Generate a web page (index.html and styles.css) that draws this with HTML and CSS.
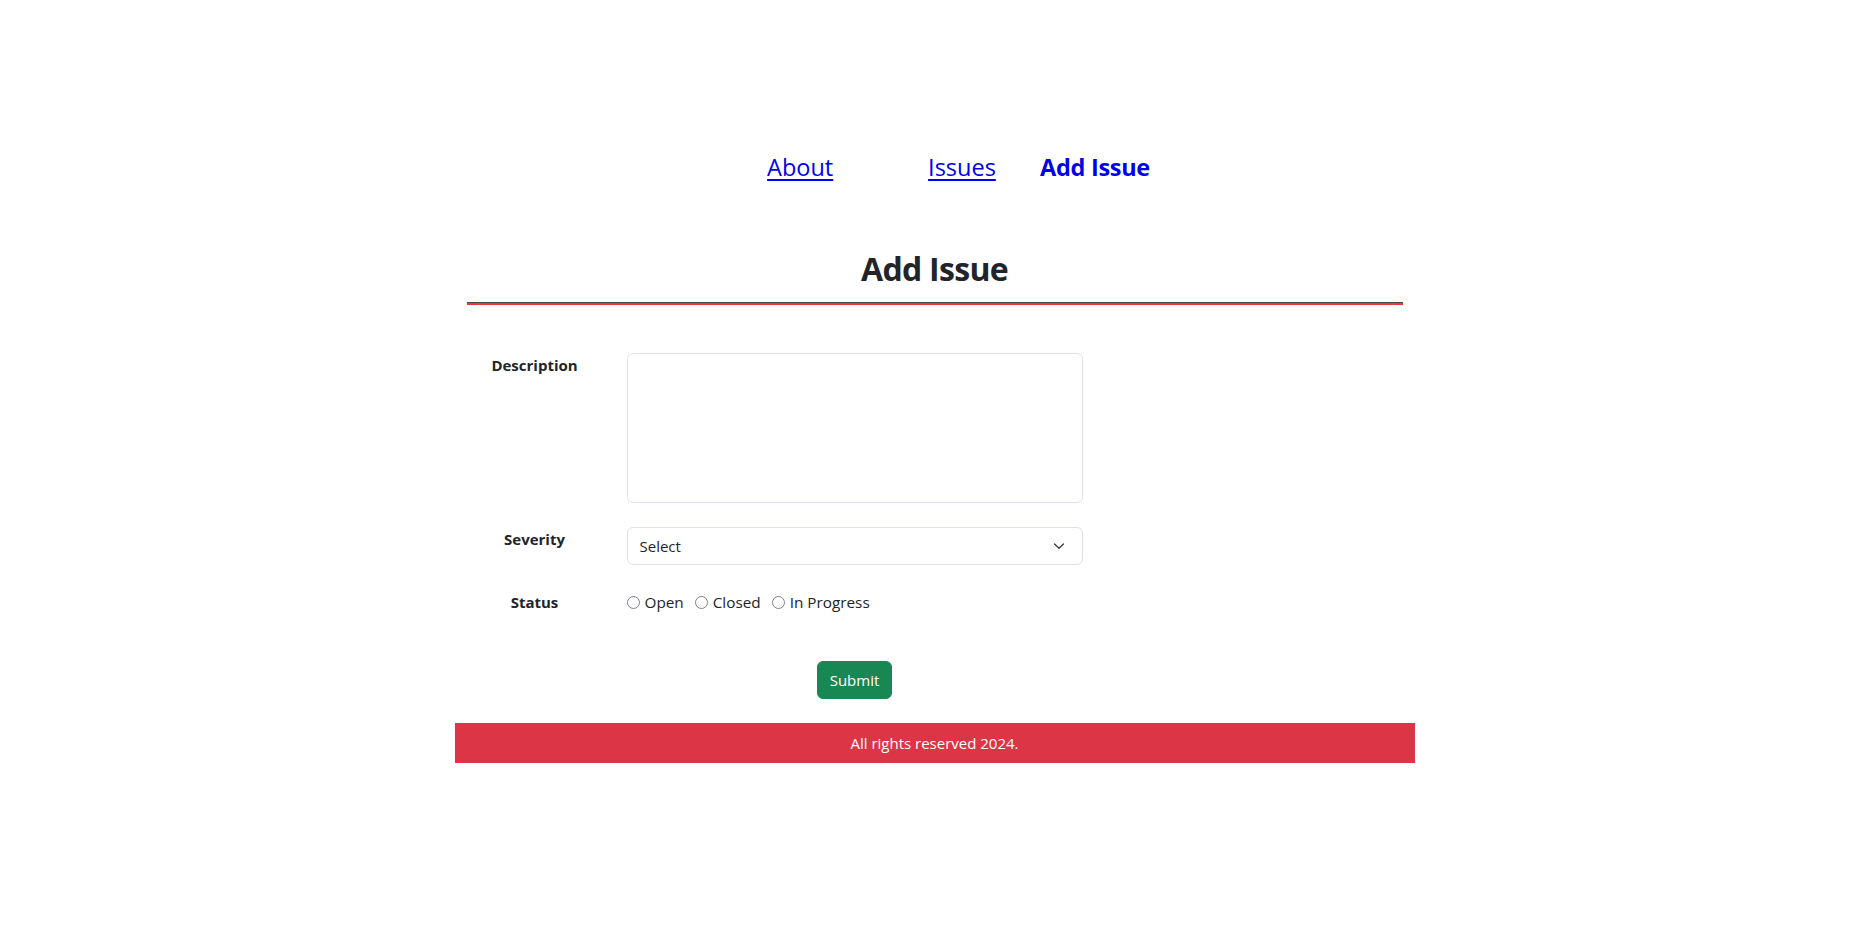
FILE: index.html
```html
<!DOCTYPE html>
<html lang="en">
<head>
<meta charset="utf-8">
<title>Add Issue</title>
<link rel="stylesheet" href="styles.css">
</head>
<body>
<div class="container">
  <nav class="nav">
    <a class="nav-link nav-about" href="#">About</a>
    <a class="nav-link nav-issues" href="#">Issues</a>
    <a class="nav-link nav-active" href="#">Add Issue</a>
  </nav>
  <h2 class="title">Add Issue</h2>
  <div class="rule"></div>
  <form class="form">
    <div class="row row-desc">
      <label class="lbl" for="desc">Description</label>
      <div class="field"><textarea id="desc" class="textarea"></textarea></div>
    </div>
    <div class="row row-sev">
      <label class="lbl" for="sev">Severity</label>
      <div class="field select-wrap">
        <select id="sev" class="select">
          <option>Select</option>
          <option>Minor</option>
          <option>Major</option>
          <option>Critical</option>
        </select>
        <svg class="chev" width="12" height="8" viewBox="0 0 12 8" aria-hidden="true"><polyline points="1.5,2 6,6.2 10.5,2" fill="none" stroke="#343a40" stroke-width="1.3" stroke-linecap="round" stroke-linejoin="round"/></svg>
      </div>
    </div>
    <div class="row row-status">
      <span class="lbl">Status</span>
      <div class="field radios">
        <label class="opt"><input type="radio" name="status" class="radio">Open</label>
        <label class="opt"><input type="radio" name="status" class="radio">Closed</label>
        <label class="opt"><input type="radio" name="status" class="radio">In Progress</label>
      </div>
    </div>
    <div class="row row-submit">
      <div class="spacer"></div>
      <div class="field field-center"><button type="button" class="btn">Submit</button></div>
    </div>
  </form>
  <footer class="footer">All rights reserved 2024.</footer>
</div>
</body>
</html>
```

FILE: styles.css
```css
* { box-sizing: border-box; }

html, body {
  margin: 0;
  padding: 0;
  background: #fff;
}

body {
  font-family: "Open Sans", "Noto Sans", Arial, sans-serif;
  font-size: 16px;
  line-height: 1.5;
  color: #212529;
}

.container {
  width: 960px;
  margin: 0 auto;
  padding: 0 12px;
}

.nav {
  display: flex;
  justify-content: center;
  padding-top: 149px;
  padding-left: 48px;
  font-size: 23.5px;
  line-height: 36px;
}

.nav-link {
  color: #0000ee;
  text-decoration: underline;
  text-underline-offset: 3px;
}

.nav-about { width: 161px; }
.nav-issues { width: 112px; }
.nav-active {
  font-weight: 700;
  text-decoration: none;
  white-space: nowrap;
  letter-spacing: -0.3px;
}

.title {
  margin: 65px 0 0;
  text-align: center;
  font-size: 32px;
  line-height: 38px;
  font-weight: 700;
  color: #212529;
  letter-spacing: -0.7px;
}

.rule {
  margin-top: 14px;
  height: 3px;
  border-top: 1px solid #4a4a4a;
  background: #e8383d;
}

.form {
  margin-top: 48px;
}

.row {
  display: flex;
  margin: 0 -12px;
}

.row-desc { margin-bottom: 24px; }
.row-sev { margin-bottom: 25px; }
.row-status { margin-bottom: 47px; }
.row-submit { margin-bottom: 24px; }

.lbl {
  width: 160px;
  flex: none;
  padding: 1px 12px 0;
  text-align: center;
  font-weight: 700;
  font-size: 15px;
  color: #212529;
}

.spacer {
  width: 160px;
  flex: none;
}

.field {
  width: 480px;
  flex: none;
  padding: 0 12px;
}

.field-center {
  display: flex;
  justify-content: center;
}

.textarea {
  display: block;
  width: 100%;
  height: 150px;
  border: 1px solid #dee2e6;
  border-radius: 6px;
  padding: 6px 12px;
  font: inherit;
  resize: none;
  background: #fff;
}

.select-wrap {
  position: relative;
}

.select {
  display: block;
  width: 100%;
  height: 38px;
  border: 1px solid #dee2e6;
  border-radius: 6px;
  padding: 6px 36px 6px 12px;
  font-family: inherit;
  font-size: 15px;
  line-height: 24px;
  color: #212529;
  background: #fff;
  appearance: none;
  -webkit-appearance: none;
}

.chev {
  position: absolute;
  right: 30px;
  top: 15px;
  pointer-events: none;
}

.radios {
  display: flex;
  align-items: center;
  font-size: 15.3px;
  line-height: 24px;
}

.opt {
  display: inline-flex;
  align-items: center;
  margin-right: 11px;
}

.radio {
  appearance: none;
  -webkit-appearance: none;
  width: 13px;
  height: 13px;
  margin: 1px 5px 0 0;
  border: 1.5px solid #7f7f8c;
  border-radius: 50%;
  background: #fff;
}

.btn {
  font-family: inherit;
  font-size: 15px;
  line-height: 24px;
  padding: 6px 12px;
  color: #fff;
  background: #198754;
  border: 1px solid #198754;
  border-radius: 6px;
  cursor: pointer;
}

.footer {
  margin: 0 -12px;
  background: #dc3545;
  color: #fff;
  text-align: center;
  font-size: 15px;
  line-height: 24px;
  padding: 8px 0;
}
```
